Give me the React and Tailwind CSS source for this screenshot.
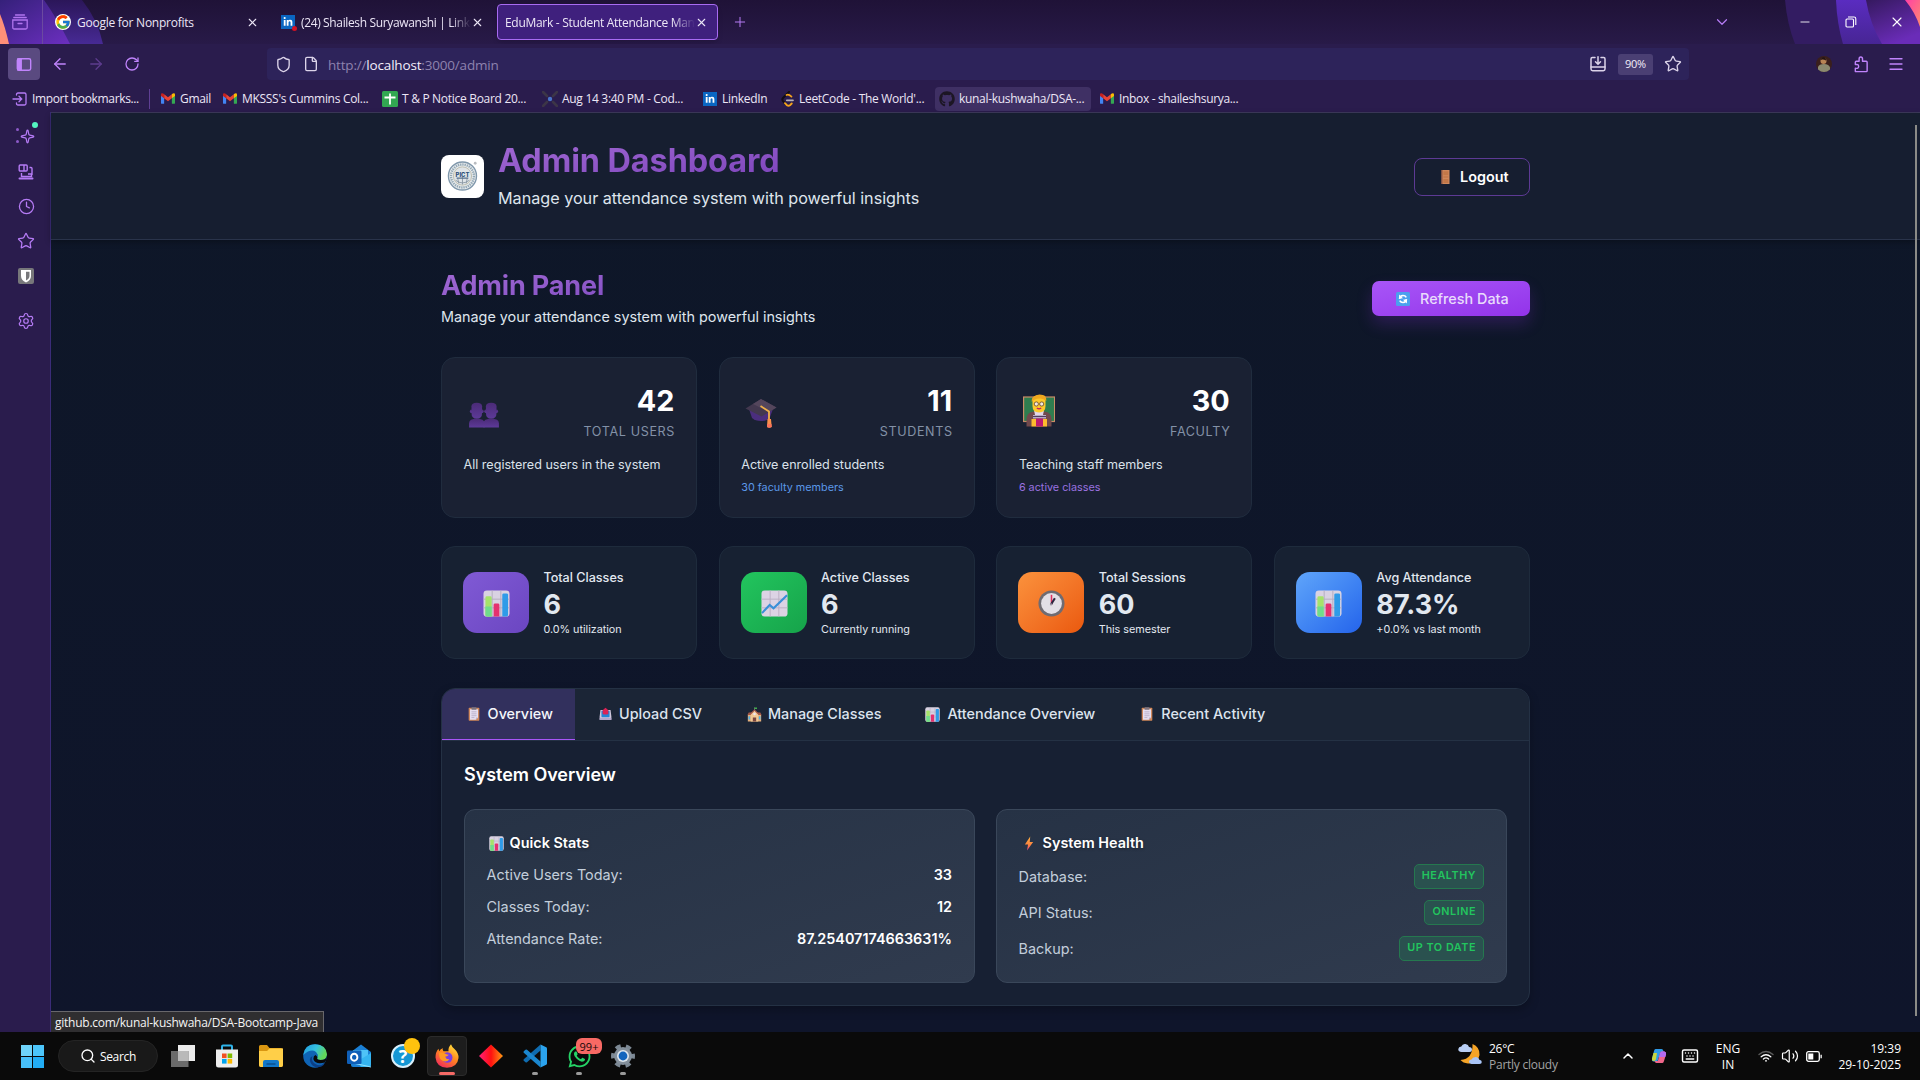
import React from "react";
import {
  X, Plus, ChevronDown, ChevronUp, Minus, ArrowLeft, ArrowRight, RotateCw, Shield, File, Star, Menu,
  Clock, Sparkle, Settings, Search, Keyboard, Volume2,
} from "lucide-react";
import { FcGoogle } from "react-icons/fc";
import { FaGithub, FaWhatsapp, FaLinkedinIn } from "react-icons/fa";

/* ---------- emoji drawings ---------- */

function ChartBars({ className }) {
  return (
    <svg viewBox="0 0 28 28" className={className}>
      <rect x="0.5" y="0.5" width="27" height="27" rx="3.5" fill="#d9d2e2" />
      <path d="M0.5 9.5h27M0.5 18.5h27M9.5 0.5v27M18.5 0.5v27" stroke="#b5adbf" strokeWidth="1" />
      <path d="M2.5 8q0-1.5 1.5-1.5h3.5q1.5 0 1.5 1.500V27.500H4q-1.500 0-1.500-1.500z" fill="#a5e36a" />
      <path d="M2.500 17h6.500v10.500H4q-1.500 0-1.500-1.500z" fill="#6fdc8c" />
      <path d="M11 15.500q0-1.500 1.500-1.500h3q1.500 0 1.500 1.500v12h-6z" fill="#e4316f" />
      <path d="M20 5q0-1.500 1.500-1.500h3Q26 3.500 26 5v21q0 1.500-1.500 1.500H20z" fill="#2f9be8" />
    </svg>
  );
}

function ChartUp({ className }) {
  return (
    <svg viewBox="0 0 28 28" className={className}>
      <rect x="0.5" y="0.5" width="27" height="27" rx="3.5" fill="#dcd3e4" />
      <path d="M0.5 9.500h27M0.5 18.500h27M9.500 0.500v27M18.500 0.500v27" stroke="#bab0c5" strokeWidth="1" />
      <path d="M1 24L9 15.500l4 3.500L27 5.500" fill="none" stroke="#3a8fd8" strokeWidth="2.200" />
    </svg>
  );
}

function WallClock({ className }) {
  return (
    <svg viewBox="0 0 28 28" className={className}>
      <circle cx="14" cy="14" r="13.500" fill="#6f6b72" />
      <circle cx="14" cy="14" r="10.800" fill="#e3dfe6" />
      <path d="M14 5v10" stroke="#e0315f" strokeWidth="1.600" />
      <path d="M13.500 15l4-6.500" stroke="#2d2440" strokeWidth="2.200" />
      <circle cx="13.500" cy="15" r="1.200" fill="#9a93a3" />
    </svg>
  );
}

function Clipboard({ className }) {
  return (
    <svg viewBox="0 0 14 16" className={className}>
      <rect x="0.800" y="0.800" width="12.400" height="15" rx="0.800" fill="#d08758" />
      <path d="M2.300 2.500h9.400v9.500l-2.500 2.700H2.300z" fill="#e6dff0" />
      <path d="M11.700 12h-2.500v2.700z" fill="#b7abc6" />
      <rect x="4" y="0.200" width="6" height="2.800" rx="0.800" fill="#7d7480" />
      <path d="M4 5.500h6M4 7.800h6M4 10h6M4 12.200h3.500" stroke="#a99fb9" strokeWidth="0.800" />
    </svg>
  );
}

function Outbox({ className }) {
  return (
    <svg viewBox="0 0 16 16" className={className}>
      <path d="M1.800 3h12.400l1 8v4.200H0.800V11z" fill="#cfc7dc" />
      <rect x="3" y="4" width="10" height="8" rx="0.800" fill="#2484d6" />
      <path d="M0.800 12.500h14.400v2.800H0.800z" fill="#b3a6cc" />
      <path d="M8 0.300L11.500 3.500V7Q11 8.500 9.800 8.500H6.200Q5 8.500 4.500 7V3.500z" fill="#dc2255" />
    </svg>
  );
}

function School({ className }) {
  return (
    <svg viewBox="0 0 18 18" className={className}>
      <path d="M9 0.500v4" stroke="#8b8b94" strokeWidth="0.800" />
      <path d="M9 0.500h3v2H9z" fill="#3eae4a" />
      <path d="M1 9.500h16v8H1z" fill="#e6b07c" />
      <path d="M0.500 9.500L2 6.500h14l1.500 3z" fill="#a55a49" />
      <path d="M4.500 17.500V8.500L9 4l4.500 4.500v9z" fill="#f3c996" />
      <path d="M3.700 9L9 3.500 14.300 9" fill="none" stroke="#a4574a" strokeWidth="1.300" />
      <circle cx="9" cy="8.500" r="1.500" fill="#ece6f2" />
      <path d="M7 17.500v-5h4v5z" fill="#7a4740" />
      <path d="M1.800 11h2v4h-2zM14.200 11h2v4h-2z" fill="#4fb3ea" />
    </svg>
  );
}

function Bolt({ className }) {
  return (
    <svg viewBox="0 0 10 16" className={className}>
      <defs>
        <linearGradient id="bolt" x1="0" y1="0" x2="0" y2="1">
          <stop offset="0" stopColor="#fbb040" />
          <stop offset="0.600" stopColor="#fb8340" />
          <stop offset="1" stopColor="#f0408a" />
        </linearGradient>
      </defs>
      <path d="M6.300 0.500L0.600 9H4L2.900 15.500 9.400 6.500H5.800z" fill="url(#bolt)" />
    </svg>
  );
}

function People({ className }) {
  return (
    <svg viewBox="0 0 32 27" className={className}>
      <defs>
        <linearGradient id="ppl" x1="0" y1="0" x2="0" y2="1">
          <stop offset="0" stopColor="#4b2b78" />
          <stop offset="1" stopColor="#5d3a98" />
        </linearGradient>
      </defs>
      {[0, 15].map((x) => (
        <g key={x} transform={`translate(${x} 0)`} fill="url(#ppl)">
          <path d="M3 4.500Q3 0.800 8.500 0.800T14 4.500v7q0 6-5.500 6T3 11.500z" />
          <ellipse cx="2.600" cy="9.500" rx="1.300" ry="1.800" />
          <ellipse cx="14.300" cy="9.500" rx="1.300" ry="1.800" />
          <path d="M0.500 26.500V22q0-4.500 8-4.500t8 4.500v4.500z" />
        </g>
      ))}
    </svg>
  );
}

function GradCap({ className }) {
  return (
    <svg viewBox="0 0 32 31" className={className}>
      <path d="M4 11l3 9q3 3 9 3 7 0 9-4l3-8z" fill="#4b2e7e" />
      <path d="M16 1L31.500 9.500 16.500 18.500 0.500 10.500z" fill="#43384f" />
      <path d="M16 1L31.500 9.500 24 14 8 6z" fill="#54465c" />
      <path d="M15.500 8l8.500 5.500V25" fill="none" stroke="#f0b04a" strokeWidth="1.800" />
      <path d="M22.500 21h3.500l0.700 8q-2.500 1.500-4.700 0z" fill="#fb8f4b" />
      <path d="M22.200 26h4.300l0.200 3q-2.500 1.500-4.700 0z" fill="#f9735b" />
    </svg>
  );
}

function Teacher({ className }) {
  return (
    <svg viewBox="0 0 32 33" className={className}>
      <rect x="0.600" y="3" width="31" height="24.500" fill="#2f7d4f" stroke="#c98c66" strokeWidth="1.200" />
      <path d="M3.500 32.500V25q0-6.500 7-7.500h11q7 1 7 7.500v7.500z" fill="#71494c" />
      <path d="M11 16h10l-1 5h-8z" fill="#e3d7e8" />
      <path d="M9.500 7q0-6 6.500-6t6.500 6v5q0 6.500-6.500 6.500t-6.500-6.500z" fill="#fdc92b" />
      <path d="M8.800 8q-0.500-5 3-6 3.500-2.500 8-1 4 1 3.400 6-3-3-7-2.500-5 0-7.400 3.500z" fill="#f0a81f" />
      <circle cx="13.300" cy="10" r="2.100" fill="#f4e9dc" stroke="#5e4630" strokeWidth="0.800" />
      <circle cx="18.700" cy="10" r="2.100" fill="#f4e9dc" stroke="#5e4630" strokeWidth="0.800" />
      <path d="M13.800 14q2.200 1.500 4.400 0" stroke="#c2255c" strokeWidth="1.300" fill="none" />
      <rect x="10" y="21" width="13" height="3.500" fill="#b9aac6" />
      <rect x="10" y="22" width="13" height="1" fill="#51405c" />
      <path d="M8.500 25h15.500v7.500H8.500z" fill="#fdbb2e" />
      <path d="M13 24.500h7v8h-7z" fill="#bb1b70" />
    </svg>
  );
}

function RefreshEmoji({ className }) {
  return (
    <svg viewBox="0 0 14 14" className={className}>
      <rect width="14" height="14" rx="1.500" fill="#4ba0ee" />
      <path d="M3.500 6.800q0.500-3.300 3.500-3.300 2.200 0 3.300 1.800M10.500 7.200q-0.500 3.300-3.500 3.300-2.200 0-3.300-1.800" fill="none" stroke="#fff" strokeWidth="1.600" />
      <path d="M3 2.600l0.200 4.200 3.800-0.600zM11 11.400l-0.200-4.200-3.800 0.600z" fill="#fff" />
    </svg>
  );
}

/* ---------- browser icons ---------- */

function GmailMark({ className }) {
  return (
    <svg viewBox="0 0 16 12" className={className}>
      <path d="M0 2v9a1 1 0 0 0 1 1h2.600V5z" fill="#4285f4" />
      <path d="M16 2v9a1 1 0 0 1-1 1h-2.600V5z" fill="#34a853" />
      <path d="M3.600 1.200L8 4.600l4.400-3.400v4.600L8 9.200 3.600 5.800z" fill="#ea4335" />
      <path d="M0 1.600C0 0 1.700-0.500 3 0.600l0.600 0.500v4.700L0 3.200z" fill="#c5221f" />
      <path d="M16 1.600C16 0 14.300-0.500 13 0.600l-0.600 0.500v4.700L16 3.200z" fill="#fbbc04" />
    </svg>
  );
}

function SheetsMark() {
  return (
    <svg viewBox="0 0 16 16" className="size-4">
      <rect width="16" height="16" rx="1.500" fill="#32a852" />
      <path d="M8 2.500v11M2.500 6.500h11" stroke="#fff" strokeWidth="1.800" />
    </svg>
  );
}

function CrossMark() {
  return (
    <svg viewBox="0 0 16 16" className="size-4">
      <path d="M1 1l4 4M15 1l-4 4M1 15l4-4M15 15l-4-4" stroke="#3c3547" strokeWidth="2.600" strokeLinecap="round" />
      <circle cx="8" cy="8" r="2.200" fill="#4a74c9" />
    </svg>
  );
}

function LeetMark() {
  return (
    <svg viewBox="0 0 16 16" className="size-4">
      <path d="M9 1L3 7Q1.700 8.500 3 10.200L5.500 12.700" fill="none" stroke="#120d14" strokeWidth="2" strokeLinecap="round" />
      <path d="M5 12.200L7 14.200Q8.500 15.300 10 14.200L11.700 12.500" fill="none" stroke="#f5a31b" strokeWidth="1.900" strokeLinecap="round" />
      <path d="M6.500 4Q8.500 2.800 11.500 5.600" fill="none" stroke="#f5a31b" strokeWidth="1.700" strokeLinecap="round" />
      <path d="M6.800 9.300H13" stroke="#b8b2b8" strokeWidth="1.700" strokeLinecap="round" />
    </svg>
  );
}

function LinkedMark({ className }) {
  return (
    <span className={`flex shrink-0 items-center justify-center bg-[#0a66c2] text-white ${className}`}>
      <FaLinkedinIn className="size-[10px]" />
    </span>
  );
}

function ImportMark() {
  return (
    <svg viewBox="0 0 16 16" className="size-4" fill="none" stroke="#b57bf5" strokeWidth="1.300" strokeLinecap="round">
      <path d="M4.500 4V3.500Q4.500 2 6 2h6.500Q14 2 14 3.500v9q0 1.500-1.500 1.500H6q-1.500 0-1.500-1.500V12" />
      <path d="M1 8h8.500M7 5.300L9.700 8 7 10.700" />
    </svg>
  );
}

/* ---------- browser chrome ---------- */

function TabStrip() {
  return (
    <div className="relative flex h-[44px] shrink-0 items-center overflow-hidden bg-linear-to-b from-[#1f1237] to-[#281a48] text-[12px] text-[#ece6f6]">
      <svg viewBox="0 0 130 44" className="absolute left-0 top-0 h-[44px] w-[130px]">
        <defs>
          <linearGradient id="tl" x1="0" y1="0" x2="1" y2="1">
            <stop offset="0" stopColor="#35207a" />
            <stop offset="1" stopColor="#6c2fc0" />
          </linearGradient>
          <linearGradient id="tl2" x1="0" y1="0" x2="0" y2="1">
            <stop offset="0" stopColor="#2b1659" />
            <stop offset="1" stopColor="#472a94" />
          </linearGradient>
        </defs>
        <path d="M0 0H82Q98 20 103 44H0z" fill="url(#tl2)" />
        <path d="M0 0H44Q58 20 70 44H0z" fill="url(#tl)" />
        <path d="M0 14Q5 26 9 44H0z" fill="#ff8f78" />
      </svg>
      <svg viewBox="0 0 150 44" className="absolute right-0 top-0 h-[44px] w-[150px]">
        <defs>
          <linearGradient id="tr" x1="0" y1="0" x2="0.500" y2="1">
            <stop offset="0" stopColor="#35195f" />
            <stop offset="1" stopColor="#6a2cb8" />
          </linearGradient>
          <linearGradient id="tr2" x1="0" y1="0" x2="0" y2="1">
            <stop offset="0" stopColor="#5a2cc0" />
            <stop offset="1" stopColor="#472594" />
          </linearGradient>
          <linearGradient id="tr3" x1="0" y1="0" x2="1" y2="1">
            <stop offset="0" stopColor="#ff3fa5" />
            <stop offset="1" stopColor="#ff8a70" />
          </linearGradient>
        </defs>
        <path d="M15 0H150V44H25Q17 24 15 0z" fill="#331c62" />
        <path d="M66 0H150V44H73Q67 24 66 0z" fill="url(#tr2)" />
        <path d="M96 0H150V44H112Q100 24 96 0z" fill="url(#tr)" />
        <path d="M135 0H150V27Q145 12 135 0z" fill="url(#tr3)" />
      </svg>

      <div className="relative flex h-full w-[42px] shrink-0 items-center justify-center">
        <svg viewBox="0 0 16 16" className="ml-[-2px] size-4" fill="none" stroke="#b074ee" strokeWidth="1.300" strokeLinecap="round">
          <path d="M3.500 1h9M1.800 3.500h12.400" />
          <path d="M0.800 6h14.400v7.500q0 1.500-1.500 1.500H2.300Q0.800 15 0.800 13.500z" />
          <path d="M6 9.500h4" />
        </svg>
      </div>
      <div className="relative h-full w-px shrink-0 bg-[#6b4aa0]" />
      <div className="relative ml-[12px] flex w-[226px] shrink-0 items-center">
        <FcGoogle className="size-[16px] rounded-full bg-white" />
        <span className="ml-[6px] w-[169px] whitespace-nowrap pt-[2px] tracking-[-0.250px]">Google for Nonprofits</span>
        <X className="size-[13px]" strokeWidth={2} />
      </div>
      <div className="relative flex w-[216px] shrink-0 items-center">
        <span className="relative">
          <LinkedMark className="size-[14px]" />
          <span className="absolute -bottom-[2px] -right-[2px] size-[5px] rounded-full bg-[#d11124]" />
        </span>
        <span className="ml-[6px] w-[170px] whitespace-nowrap pt-[2px] tracking-[-0.360px] [mask-image:linear-gradient(to_right,black_88%,transparent)]">(24) Shailesh Suryawanshi | Linke</span>
        <X className="size-[13px]" strokeWidth={2} />
      </div>
      <div className="relative flex h-[36px] w-[221px] shrink-0 items-center rounded-[4px] border border-[#a86bf2] bg-[#3f207d] pl-[7px] shadow-md">
        <span className="w-[190px] whitespace-nowrap pt-[2px] tracking-[-0.300px] [mask-image:linear-gradient(to_right,black_88%,transparent)]">EduMark - Student Attendance Man</span>
        <X className="size-[13px]" strokeWidth={2} />
      </div>
      <Plus className="relative ml-[14px] size-[16px] text-[#b57bf5]" strokeWidth={1.500} />
      <div className="grow" />
      <ChevronDown className="relative mr-[53px] size-[18px] text-[#b57bf5]" strokeWidth={1.600} />
      <div className="relative flex w-[136px] items-center text-white">
        <Minus className="ml-[14px] size-[14px]" strokeWidth={1.500} />
        <svg viewBox="0 0 12 12" className="ml-[33px] size-[12px]" fill="none" stroke="currentColor" strokeWidth="1.100">
          <rect x="1" y="3" width="7.500" height="8" rx="1" />
          <path d="M3 1h6q1.800 0 1.800 1.800V9" />
        </svg>
        <X className="ml-[32px] size-[16px]" strokeWidth={1.600} />
      </div>
    </div>
  );
}

function NavBar() {
  return (
    <div className="flex h-[38px] shrink-0 items-center pt-[2px] text-[#c084fc]">
      <div className="ml-[8px] flex size-[32px] shrink-0 items-center justify-center rounded-[4px] bg-[#5a4a80]">
        <svg viewBox="0 0 16 14" className="h-[13px] w-[16px]" fill="none" stroke="currentColor" strokeWidth="1.500">
          <rect x="0.800" y="0.800" width="14.400" height="12.400" rx="1.800" />
          <path d="M1.500 1h3.500v12H1.500z" fill="currentColor" />
        </svg>
      </div>
      <ArrowLeft className="ml-[11px] size-[18px]" strokeWidth={1.700} />
      <ArrowRight className="ml-[18px] size-[18px] text-[#5d3c8e]" strokeWidth={1.700} />
      <RotateCw className="ml-[19px] size-[16px]" strokeWidth={1.900} />
      <div className="ml-[127px] flex h-[32px] w-[1422px] items-center rounded-[4px] bg-[#2d235a] text-[#dcd4ea]">
        <Shield className="ml-[8px] size-[17px]" strokeWidth={1.900} />
        <File className="ml-[11px] size-[16px]" strokeWidth={2} />
        <span className="ml-[9px] whitespace-nowrap pt-[2px] text-[13.500px] tracking-[-0.180px] text-[#8d82ae]">
          http://<span className="text-[#f2eefa]">localhost</span>:3000/admin
        </span>
        <div className="grow" />
        <svg viewBox="0 0 16 16" className="size-[16px]" fill="none" stroke="currentColor" strokeWidth="1.500" strokeLinecap="round">
          <path d="M5 1.500H2.300Q1 1.500 1 3v10q0 1.700 1.700 1.700h10.600Q15 14.700 15 13V3q0-1.500-1.300-1.500H11" />
          <path d="M8 0.800V8M5.500 5.800L8 8.300l2.500-2.500M1 11h14" />
        </svg>
        <span className="ml-[12px] flex h-[21px] w-[35px] items-center justify-center rounded-[3px] bg-[#4a3f73] pt-px text-[11px] tracking-[-0.300px] text-[#f2eefa]">90%</span>
        <Star className="ml-[11px] mr-[7px] size-[18px]" strokeWidth={1.800} />
      </div>
      <svg viewBox="0 0 16 16" className="ml-[127px] size-[16px]">
        <defs>
          <clipPath id="av"><circle cx="8" cy="8" r="8" /></clipPath>
        </defs>
        <g clipPath="url(#av)">
          <rect width="16" height="16" fill="#3a1f1c" />
          <path d="M2 16V11q1-3 6-3t6 3.500V16z" fill="#8c8a70" />
          <circle cx="7.500" cy="5" r="3" fill="#b88455" />
          <path d="M4.500 4q1-3.500 4-2.500 2 1 1.500 3-3-1.500-5.500-0.500z" fill="#241413" />
        </g>
      </svg>
      <svg viewBox="0 0 16 18" className="ml-[21px] h-[17px] w-[16px]" fill="none" stroke="currentColor" strokeWidth="1.500" strokeLinejoin="round">
        <path d="M2 16.500V13q3.500 0.500 3.500-2T2 9V6.500Q2 5.500 3 5.500h3V3.200Q6 1 7.800 1T9.600 3.200V5.500h3.900q1 0 1 1v9q0 1-1 1z" />
      </svg>
      <Menu className="ml-[18px] size-[18px]" strokeWidth={1.700} />
    </div>
  );
}

const bookmarks = [
  { icon: <GmailMark className="h-[11px] w-[14px]" />, text: "Gmail", box: "w-[62px]", gap: "gap-[5px]" },
  { icon: <GmailMark className="h-[11px] w-[14px]" />, text: "MKSSS's Cummins Col...", box: "w-[159px]", gap: "gap-[5px]" },
  { icon: <SheetsMark />, text: "T & P Notice Board 20...", box: "w-[160px]", gap: "gap-[4px]" },
  { icon: <CrossMark />, text: "Aug 14 3:40 PM - Cod...", box: "w-[161px]", gap: "gap-[4px]" },
  { icon: <LinkedMark className="size-[14px]" />, text: "LinkedIn", box: "w-[77px]", gap: "gap-[5px]" },
  { icon: <LeetMark />, text: "LeetCode - The World'...", box: "w-[155px]", gap: "gap-[3px]" },
];

function Bookmarks() {
  return (
    <div className="flex h-[30px] shrink-0 items-center whitespace-nowrap pt-[3px] text-[12px] tracking-[-0.300px] text-[#ece6f6]">
      <div className="ml-[12px] flex w-[137px] items-center gap-[4px]"><ImportMark /><span className="pt-px tracking-[-0.350px]">Import bookmarks...</span></div>
      <div className="mr-[11px] h-[20px] w-px bg-[#5f3f94]" />
      {bookmarks.map((b) => (
        <div key={b.text} className={`flex shrink-0 items-center ${b.box} ${b.gap}`}>{b.icon}<span className="pt-px">{b.text}</span></div>
      ))}
      <div className="flex h-[24px] w-[156px] shrink-0 items-center gap-[4px] rounded-[4px] bg-[#3f3064] pl-[4px]">
        <FaGithub className="size-[16px] text-[#1c1624]" /><span className="pt-px">kunal-kushwaha/DSA-...</span>
      </div>
      <div className="ml-[9px] flex items-center gap-[5px]"><GmailMark className="h-[11px] w-[14px]" /><span className="pt-px tracking-[-0.340px]">Inbox - shaileshsurya...</span></div>
    </div>
  );
}

function SideStrip() {
  return (
    <div className="flex w-[51px] shrink-0 flex-col items-center border-r border-[#3b2c78] bg-[#2a1c4d] pl-[2px] pt-[14px] text-[#b57bf5]">
      <div className="relative flex h-[20px] items-center">
        <Sparkle className="ml-[3px] size-[15px]" strokeWidth={2} />
        <span className="absolute left-[-1px] top-[2px] size-[3px] rounded-full bg-[#8d5ac9]" />
        <span className="absolute left-[-1px] top-[14px] size-[3px] rounded-full bg-[#8d5ac9]" />
        <span className="absolute left-[15px] top-[-4px] size-[6px] rounded-full bg-[#54f5c0]" />
      </div>
      <svg viewBox="0 0 16 16" className="mt-[18px] size-[16px]" fill="none" stroke="currentColor" strokeWidth="1.400">
        <rect x="1.200" y="1" width="8" height="6" rx="1" />
        <path d="M6 1v6M11.500 3.500H13q1 0 1 1V11M3.500 9v3.500h10V10H10" />
        <path d="M1.500 14.500h13" strokeWidth="2" strokeLinecap="round" />
      </svg>
      <Clock className="mt-[18px] size-[17px]" strokeWidth={1.800} />
      <Star className="mt-[17px] size-[18px]" strokeWidth={1.700} />
      <div className="mt-[18px] flex size-[16px] items-center justify-center rounded-[2px] bg-[#77777a]">
        <svg viewBox="0 0 12 14" className="h-[14px] w-[12px]">
          <path d="M1 1h10v6q0 4-5 6.500Q1 11 1 7z" fill="#fff" />
          <path d="M6 2.800h3.500V7q0 2.600-3.500 4.500z" fill="#77777a" />
        </svg>
      </div>
      <Settings className="mt-[28px] size-[18px]" strokeWidth={1.600} />
    </div>
  );
}

/* ---------- dashboard ---------- */

function Logo() {
  return (
    <div className="flex size-[43px] shrink-0 items-center justify-center rounded-[8px] bg-white">
      <svg viewBox="0 0 32 32" className="size-[34px]">
        <circle cx="15.500" cy="16" r="13.200" fill="#e9ecee" stroke="#7f97ab" strokeWidth="1.300" />
        <circle cx="15.500" cy="16" r="10.800" fill="none" stroke="#93a8b5" strokeWidth="2.200" strokeDasharray="1.300 0.800" />
        <circle cx="15.500" cy="16" r="8.600" fill="#dfe4e8" stroke="#b9b9a8" strokeWidth="0.800" />
        <path d="M9 20q6.500 5 13 0M15.500 17v7M11 18l1 5M20 18l-1 5" stroke="#8795a1" strokeWidth="0.800" fill="none" />
        <text x="15.500" y="16.500" textAnchor="middle" fontSize="5.500" fontWeight="800" fill="#2c4e78" fontFamily="Inter, sans-serif">PICT</text>
        <path d="M10 18h11" stroke="#56708d" strokeWidth="1.200" />
        <circle cx="27.500" cy="4" r="1.300" fill="#b9bcc0" />
      </svg>
    </div>
  );
}

const topCards = [
  { n: "42", label: "TOTAL USERS", desc: "All registered users in the system", icon: <People className="mt-[17px] h-[26px] w-[32px]" /> },
  { n: "11", label: "STUDENTS", desc: "Active enrolled students", note: "30 faculty members", tone: "text-[#5a98e8]", icon: <GradCap className="mt-[13px] h-[31px] w-[32px]" /> },
  { n: "30", label: "FACULTY", desc: "Teaching staff members", note: "6 active classes", tone: "text-[#9b72e0]", icon: <Teacher className="mt-[9px] h-[33px] w-[32px]" /> },
];

const rowCards = [
  { label: "Total Classes", n: "6", note: "0.0% utilization", bg: "from-[#805ad5] to-[#6b46c1]", icon: <ChartBars className="ml-px mt-[2px] size-[27px]" /> },
  { label: "Active Classes", n: "6", note: "Currently running", bg: "from-[#22c55e] to-[#16a34a]", icon: <ChartUp className="ml-px mt-[2px] size-[27px]" /> },
  { label: "Total Sessions", n: "60", note: "This semester", bg: "from-[#fb923c] to-[#ea580c]", icon: <WallClock className="mt-[2px] size-[27px]" /> },
  { label: "Avg Attendance", n: "87.3%", note: "+0.0% vs last month", bg: "from-[#60a5fa] to-[#2563eb]", icon: <ChartBars className="mt-[2px] size-[27px]" /> },
];

const tabs = [
  { text: "Upload CSV", icon: <Outbox className="ml-[3px] mr-[7px] h-[14px] w-[13px]" /> },
  { text: "Manage Classes", icon: <School className="ml-[2px] mr-[6px] h-[15px] w-[15px]" /> },
  { text: "Attendance Overview", icon: <ChartBars className="ml-[1px] mr-[7px] size-[15px]" /> },
  { text: "Recent Activity", icon: <Clipboard className="ml-[3px] mr-[8px] h-[14px] w-[12px]" /> },
];

const stats = [["Active Users Today:", "33"], ["Classes Today:", "12"], ["Attendance Rate:", "87.25407174663631%"]];
const health = [["Database:", "HEALTHY"], ["API Status:", "ONLINE"], ["Backup:", "UP TO DATE"]];

function InnerCard({ title, icon, children }) {
  return (
    <div className="h-[174px] rounded-[11px] border border-[#3a475a] bg-linear-to-br from-[#263245] to-[#303b4e] pl-[21.600px] pr-[22px] pt-[22px]">
      <div className="flex h-[22px] items-center text-[14.400px] font-semibold text-white [text-shadow:0_1px_3px_rgba(0,0,0,0.400)]">{icon}{title}</div>
      {children}
    </div>
  );
}

function Dashboard() {
  return (
    <div className="flex grow flex-col border-t border-[#3d3a5c] bg-linear-to-b from-[#0e1728] to-[#0f152b] font-[Inter,sans-serif]">
      <header className="flex h-[127px] shrink-0 justify-center border-b border-[#29334a] bg-[#161e30] shadow-[0_2px_6px_rgba(0,0,0,0.300)]">
        <div className="flex w-[1089px] items-center">
          <Logo />
          <div className="ml-[14px]">
            <h1 className="w-fit bg-linear-to-br from-[#a269d4] to-[#7c43ba] bg-clip-text text-[32.400px] font-bold leading-[40px] tracking-[-0.080px] text-transparent">Admin Dashboard</h1>
            <p className="mt-[4px] text-[16.200px] leading-[26px] tracking-[-0.020px] text-[#dfe5ed]">Manage your attendance system with powerful insights</p>
          </div>
          <button className="ml-auto mt-[2px] flex h-[38px] w-[116px] items-center rounded-[8px] border border-[#5d3a94] pl-[26px] text-[14.400px] font-semibold text-white">
            <svg viewBox="0 0 9 14" className="mr-[10px] h-[14px] w-[9px]">
              <path d="M0.500 0h8v14h-8z" fill="#d0885c" />
              <path d="M0.500 0h1v14h-1z" fill="#8d5340" />
              <path d="M2.300 1.200h5v4h-5zM2.300 6.300h5v1.500h-5zM2.300 9h5v4h-5z" fill="#c27748" />
            </svg>
            Logout
          </button>
        </div>
      </header>
      <main className="mx-auto w-[1089px] pt-[29px]">
        <div className="flex h-[59px] items-center justify-between">
          <div>
            <h2 className="mt-px w-fit bg-linear-to-br from-[#a269d4] to-[#8450c4] bg-clip-text text-[27px] font-bold leading-[32px] tracking-[-0.150px] text-transparent">Admin Panel</h2>
            <p className="mt-[4px] text-[14.400px] leading-[22px] tracking-[-0.020px] text-[#dfe5ed]">Manage your attendance system with powerful insights</p>
          </div>
          <button className="flex h-[35px] w-[158px] items-center rounded-[7px] bg-linear-to-br from-[#a855f7] to-[#9333ea] pl-[24px] text-[14.400px] font-medium text-[#e8dcfb] shadow-[0_8px_16px_rgba(147,51,234,0.220)]">
            <RefreshEmoji className="mr-[10px] size-[14px]" />
            Refresh Data
          </button>
        </div>

        <div className="mt-[29px] grid grid-cols-4 gap-x-[21.600px]">
          {topCards.map((c) => (
            <section key={c.label} className="h-[161px] rounded-[14px] border border-[#202c3e] bg-[#1a2133] px-[21.600px] pt-[27px]">
              <div className="flex h-[56px] justify-between pl-[4px]">
                {c.icon}
                <div className="text-right">
                  <div className="text-[28.800px] font-bold leading-[32px] text-white">{c.n}</div>
                  <div className="mr-[-0.600px] mt-[6px] text-[12.600px] leading-[18px] tracking-[0.630px] text-[#8391a7]">{c.label}</div>
                </div>
              </div>
              <p className="mt-[15px] text-[12.600px] leading-[18px] tracking-[-0.020px] text-[#dbe2ea]">{c.desc}</p>
              {c.note && <p className={`mt-[5px] text-[10.800px] leading-[17px] ${c.tone}`}>{c.note}</p>}
            </section>
          ))}
        </div>

        <div className="mt-[28px] grid grid-cols-4 gap-x-[21.600px]">
          {rowCards.map((c) => (
            <section key={c.label} className="flex h-[113px] items-center rounded-[14px] border border-[#1e2b3c] bg-[#172132] pl-[21px] text-[#e2e8f0]">
              <div className={`flex h-[61px] w-[66px] shrink-0 items-center justify-center rounded-[14px] bg-linear-to-br ${c.bg}`}>{c.icon}</div>
              <div className="ml-[14.400px] mt-[2px]">
                <div className="text-[12.600px] font-medium leading-[18px]">{c.label}</div>
                <div className="my-[2px] text-[27px] font-bold leading-[31px]">{c.n}</div>
                <div className="text-[10.800px] leading-[16px] tracking-[-0.020px]">{c.note}</div>
              </div>
            </section>
          ))}
        </div>

        <section className="mt-[29px] h-[318px] overflow-hidden rounded-[14px] border border-[#243144] bg-[#172033] shadow-[0_4px_10px_rgba(0,0,0,0.250)]">
          <nav className="flex h-[52px] border-b border-[#243144] bg-[#1b2536] text-[14.400px] font-medium text-[#dde4ee]">
            <div className="flex items-center border-b border-[#a855f7] bg-[#32305d] px-[21.600px] text-[#f4f6fb]">
              <Clipboard className="ml-[4px] mr-[8px] h-[14px] w-[12px]" />Overview
            </div>
            {tabs.map((t) => (
              <div key={t.text} className="flex items-center border-b border-transparent px-[21.500px]">{t.icon}{t.text}</div>
            ))}
          </nav>
          <div className="px-[22px] pt-[21px]">
            <h3 className="text-[18px] font-semibold leading-[26px] tracking-[-0.050px] text-white">System Overview</h3>
            <div className="mt-[21px] grid grid-cols-2 gap-[21px]">
              <InnerCard title="Quick Stats" icon={<ChartBars className="ml-[2px] mr-[6px] size-[15px]" />}>
                <div className="mt-[5px]">
                  {stats.map(([k, v]) => (
                    <div key={k} className="flex h-[32px] items-center justify-between text-[14.400px]">
                      <span className="text-[#c3cedb]">{k}</span>
                      <span className="font-semibold text-white">{v}</span>
                    </div>
                  ))}
                </div>
              </InnerCard>
              <InnerCard title="System Health" icon={<Bolt className="ml-[5px] mr-[9px] h-[15px] w-[10px]" />}>
                <div className="mt-[4px]">
                  {health.map(([k, v]) => (
                    <div key={k} className="flex h-[36px] items-center justify-between text-[14.400px]">
                      <span className="pt-[2px] text-[#c3cedb]">{k}</span>
                      <span className="flex h-[25px] items-center rounded-[5px] border border-[#25784f] bg-[#2a514f] px-[7px] pt-px text-[10.800px] font-semibold tracking-[0.540px] text-[#22c55e]">{v}</span>
                    </div>
                  ))}
                </div>
              </InnerCard>
            </div>
          </div>
        </section>
      </main>
    </div>
  );
}

/* ---------- taskbar ---------- */

function TaskIcons() {
  return (
    <div className="flex items-center gap-[20px]">
      <svg viewBox="0 0 24 24" className="size-[24px]">
        <rect x="7" y="1" width="17" height="16" fill="#ececec" />
        <rect x="0" y="7" width="17.500" height="16" fill="#6b6b6b" />
        <rect x="7" y="7" width="10.500" height="10" fill="#b9b9b9" />
      </svg>
      <svg viewBox="0 0 24 24" className="size-[24px]">
        <path d="M7 6V2.500Q7 1.500 8 1.500h8q1 0 1 1V6" fill="none" stroke="#2fb4ea" strokeWidth="2" />
        <path d="M1 5.500h22V21q0 2.500-2.500 2.500h-17Q1 23.500 1 21z" fill="#eeeeee" />
        <path d="M7 9.500h4.600v4.600H7z" fill="#f25022" /><path d="M12.600 9.500h4.600v4.600h-4.600z" fill="#7fba00" />
        <path d="M7 15h4.600v4.600H7z" fill="#00a4ef" /><path d="M12.600 15h4.600v4.600h-4.600z" fill="#ffb900" />
      </svg>
      <svg viewBox="0 0 24 24" className="size-[24px]">
        <path d="M0 2.500Q0 1 1.500 1H8l2.500 3H22Q24 4 24 6v15q0 2-2 2H2q-2 0-2-2z" fill="#d99611" />
        <path d="M0 7h8l2.500-2.500H24V21q0 2-2 2H2q-2 0-2-2z" fill="#ffcf48" />
        <path d="M4 23v-5q0-2 2-2h12q2 0 2 2v5z" fill="#1277c8" />
        <path d="M7.500 20h9" stroke="#0b4f8f" strokeWidth="1.500" />
      </svg>
      <svg viewBox="0 0 24 24" className="size-[24px]">
        <defs>
          <linearGradient id="eg" x1="0" y1="0" x2="1" y2="0.400">
            <stop offset="0" stopColor="#1f9be0" />
            <stop offset="0.550" stopColor="#35c1e0" />
            <stop offset="1" stopColor="#62d857" />
          </linearGradient>
        </defs>
        <circle cx="12" cy="12" r="11.800" fill="#0f64b5" />
        <path d="M0.300 11Q1.500 0.300 12 0.200 23.500 0.700 24 10.500q-0.500 5.500-6.500 5.500-4.500 0-3-3 1-2.500-1.500-5-5-4-12.700 3z" fill="url(#eg)" />
        <path d="M9.500 12Q7.500 17 12.500 20t9.500-1.500q-1 3-3.500 4-8 2.500-11-4Q5.500 14 9.500 12z" fill="#0c3f86" />
        <path d="M14.500 13q-1.500 3 3 3 6 0 6.300-4.500 0.300 4-2 7-9 2.500-11.300-3-0.500-3.500 2-4.500z" fill="#0a0a0a" />
      </svg>
      <svg viewBox="0 0 24 24" className="size-[24px]">
        <path d="M4 8l10-7.500L24 8v13q0 2-2 2H6q-2 0-2-2z" fill="#1a7fd4" />
        <path d="M6 6h15v10H6z" fill="#4fc3f7" />
        <path d="M24 9L10 17.500 14 23h8q2 0 2-2z" fill="#35b5f1" />
        <path d="M6 19l18 4" stroke="#8fe0ff" strokeWidth="1.200" />
        <rect x="0" y="6.500" width="14.500" height="13.500" rx="1.200" fill="#0f5fb8" />
        <ellipse cx="7.200" cy="13.200" rx="3.200" ry="3.500" fill="none" stroke="#fff" strokeWidth="1.900" />
      </svg>
      <div className="relative size-[24px]">
        <div className="flex size-[24px] items-center justify-center rounded-full border-2 border-[#d9f0fb] bg-[#1597d4] text-[18px] font-bold leading-none text-white">?</div>
        <span className="absolute left-[13px] top-[-6px] size-[16px] rounded-full bg-[#ffc20e]" />
      </div>
      <div className="relative mx-[-8px] flex h-[40px] w-[40px] items-center justify-center rounded-[4px] border border-[#2b2b2b] bg-[#1d1d1d]">
        <svg viewBox="0 0 24 24" className="size-[24px]">
          <defs>
            <linearGradient id="ff" x1="0.800" y1="0" x2="0.200" y2="1">
              <stop offset="0" stopColor="#ffe23e" />
              <stop offset="0.450" stopColor="#ff8a1e" />
              <stop offset="1" stopColor="#f0255f" />
            </linearGradient>
          </defs>
          <path d="M16 0.300q1 3 3.500 4.800 4.300 4 4 9Q22.500 23.500 12 23.800 1.500 23.500 0.500 13.500 0.500 8 3.500 4.800l0.700 2.500Q5.500 5 8 4.300 7 6 8.500 7.200h5Q13 3.500 16 0.300z" fill="url(#ff)" />
          <circle cx="12.300" cy="13.500" r="5.200" fill="#7a3fe0" />
          <path d="M4.200 8.500Q8 8 10 9.500t4 1q-1 2-3.800 2.200 1 3 4.300 2.500-3 3.500-7 1.500T4.200 8.500z" fill="#ff9a22" />
        </svg>
        <span className="absolute bottom-0 h-[3px] w-[16px] rounded-full bg-[#f56a66]" />
      </div>
      <svg viewBox="0 0 24 24" className="size-[24px]">
        <defs>
          <linearGradient id="dm" x1="0" y1="0" x2="1" y2="0">
            <stop offset="0" stopColor="#ff1f7a" />
            <stop offset="0.500" stopColor="#ff1010" />
            <stop offset="1" stopColor="#ff9a12" />
          </linearGradient>
        </defs>
        <path d="M12 0.500L24 12 12 23.500 0 12z" fill="url(#dm)" />
      </svg>
      <div className="relative size-[24px]">
        <svg viewBox="0 0 24 24" className="size-[24px]">
          <path d="M17.500 0.500v6L4 18.300q-0.800 0.600-1.500 0l-1.700-1.600q-0.700-0.700 0-1.400z" fill="#0f6cb0" />
          <path d="M17.500 23.500v-6L4 5.700q-0.800-0.600-1.500 0L0.800 7.300q-0.700 0.700 0 1.400z" fill="#1b87cf" />
          <path d="M17.500 0.500L23.200 3.200Q24 3.600 24 4.500v15q0 0.900-0.800 1.300l-5.700 2.700z" fill="#2ba3ee" />
        </svg>
        <span className="absolute left-[9px] top-[28px] h-[3px] w-[6px] rounded-full bg-[#9a9a9a]" />
      </div>
      <div className="relative size-[24px]">
        <FaWhatsapp className="size-[25px] text-[#25d366]" />
        <span className="absolute left-[9px] top-[-6px] flex h-[16px] w-[26px] items-center justify-center rounded-[6px] bg-[#f76964] text-[11px] leading-none text-[#150708]">99+</span>
        <span className="absolute left-[9px] top-[28px] h-[3px] w-[6px] rounded-full bg-[#9a9a9a]" />
      </div>
      <div className="relative size-[24px]">
        <svg viewBox="0 0 24 24" className="size-[24px]">
          <circle cx="12" cy="12" r="10" fill="none" stroke="#7c8894" strokeWidth="4" strokeDasharray="5.200 5.272" strokeDashoffset="2.600" />
          <circle cx="12" cy="12" r="9" fill="#84909c" />
          <circle cx="12" cy="12" r="6" fill="#dfe7ee" />
          <circle cx="12" cy="12" r="4.400" fill="#1365bd" />
        </svg>
        <span className="absolute left-[9px] top-[28px] h-[3px] w-[6px] rounded-full bg-[#9a9a9a]" />
      </div>
    </div>
  );
}

function Taskbar() {
  return (
    <footer className="flex h-[48px] shrink-0 items-center bg-[#0a0a0a] text-[12px] leading-[16px] text-white">
      <div className="ml-[21px] grid size-[23px] shrink-0 grid-cols-2 gap-px">
        <span className="bg-[#6fd4fb]" /><span className="bg-[#4cc6fb]" />
        <span className="bg-[#47c0fa]" /><span className="bg-[#22adf5]" />
      </div>
      <div className="ml-[14px] mr-[13px] flex h-[32px] w-[100px] shrink-0 items-center rounded-full border border-[#242424] bg-[#191919] pl-[21px]">
        <Search className="size-[16px]" strokeWidth={2} />
        <span className="ml-[4px] pt-px tracking-[-0.350px]">Search</span>
      </div>
      <TaskIcons />
      <div className="grow" />
      <svg viewBox="0 0 24 22" className="mb-[5px] h-[22px] w-[24px]">
        <path d="M14.500 1Q22 4 21.500 12 20 21 10 20.500 5 20 2.500 17 15 16 14.500 1z" fill="#f5a427" />
        <path d="M3.500 9Q0 8.500 0.300 6T3.300 3.500Q4.500 0.500 7.500 1t3.500 3q3 0 3 2.500T11.500 9z" fill="#b9cff5" />
        <path d="M13.500 21Q10.800 20.500 11 18.500t2.500-2q1-2.500 4-2.500t3.800 2.800Q23.800 17 23.800 19t-2.300 2z" fill="#a9c5f7" />
      </svg>
      <div className="ml-[7px] w-[131px] pt-px tracking-[-0.250px]"><div>26°C</div><div className="text-[#a3a3a3]">Partly cloudy</div></div>
      <ChevronUp className="size-[16px]" strokeWidth={2.200} />
      <svg viewBox="0 0 16 16" className="ml-[15px] size-[16px]">
        <path d="M4.500 1h6q1.500 0 2 2l0.300 1H9.500L7 12q-0.500 1.500-2 1.500H2.500Q0.500 13 1 10.500L3 3Q3.500 1 4.500 1z" fill="#2f9be8" />
        <path d="M1 10.500L2.500 5H6l-1 6q-0.500 2-2 2Q0.500 13 1 10.500z" fill="#c9d83e" />
        <path d="M11.500 15h-6q-1.500 0-2-2h3.300L9 5q0.500-1.500 2-1.500h2.500q2 0.500 1.500 3L13 13q-0.500 2-1.500 2z" fill="#f0668a" />
        <path d="M9 5q0.500-1.500 2-1.500h2.500q2 0.500 1.500 3L14.300 9H8z" fill="#b56bf2" />
      </svg>
      <Keyboard className="ml-[14px] size-[18px]" strokeWidth={1.900} />
      <div className="ml-[15px] w-[28px] pt-[2px] text-center"><div>ENG</div><div>IN</div></div>
      <svg viewBox="0 0 16 12" className="ml-[16px] h-[12px] w-[16px]" fill="none" stroke="#fff" strokeWidth="1.300" strokeLinecap="round">
        <path d="M1 4.500q7-6 14 0" stroke="#5c5c5c" />
        <path d="M3.200 6.800q4.800-4.200 9.600 0M5.400 9q2.600-2.200 5.200 0" />
        <circle cx="8" cy="10.800" r="0.900" fill="#fff" stroke="none" />
      </svg>
      <Volume2 className="ml-[7px] size-[18px]" strokeWidth={1.600} />
      <svg viewBox="0 0 16 11" className="ml-[7px] h-[11px] w-[16px]">
        <rect x="0.700" y="0.700" width="12.600" height="9.600" rx="1.800" fill="none" stroke="#fff" strokeWidth="1.300" />
        <rect x="2.300" y="2.500" width="5" height="6" fill="#fff" />
        <path d="M14.500 3.800h1.300v3.400h-1.300z" fill="#fff" />
      </svg>
      <div className="mr-[19px] w-[79px] pt-px text-right"><div>19:39</div><div>29-10-2025</div></div>
    </footer>
  );
}

export default function App() {
  return (
    <div className="flex h-[1080px] w-[1920px] flex-col overflow-hidden bg-[#2a1c4d] font-['Open_Sans',sans-serif]">
      <TabStrip />
      <NavBar />
      <Bookmarks />
      <div className="relative flex h-[920px] shrink-0">
        <SideStrip />
        <Dashboard />
        <div className="absolute bottom-[16px] right-[3px] top-[13px] w-[2px] bg-[#8b8b87]" />
        <div className="absolute bottom-0 left-[51px] flex h-[21px] w-[273px] items-center whitespace-nowrap border-r border-t border-[#68676b] bg-[#2f2e30] pl-[4px] pt-[2px] text-[12px] tracking-[-0.250px] text-[#f4f4f4]">
          github.com/kunal-kushwaha/DSA-Bootcamp-Java
        </div>
      </div>
      <Taskbar />
    </div>
  );
}
